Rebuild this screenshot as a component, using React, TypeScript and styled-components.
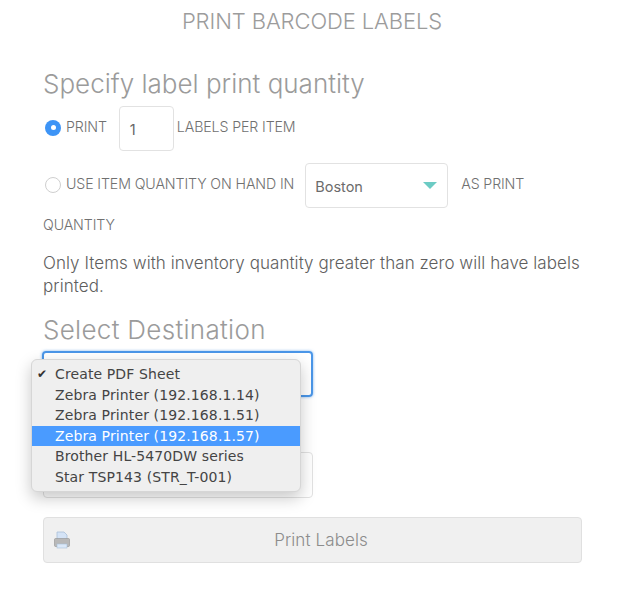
import { createGlobalStyle } from "styled-components"
import styled from "styled-components"

const GlobalStyle = createGlobalStyle`
  html, body {
    margin: 0;
    padding: 0;
    background: #fff;
  }
  body {
    font-family: Inter, "Liberation Sans", sans-serif;
    overflow: hidden;
  }
`

const Page = styled.div`
  width: 622px;
  height: 599px;
  box-sizing: border-box;
  padding: 9px 41px 0 43px;
  display: flex;
  flex-direction: column;
`

const Title = styled.h1`
  margin: 0;
  font-size: 22px;
  line-height: 24px;
  font-weight: 300;
  color: #9c9c9c;
  text-align: center;
  letter-spacing: -0.1px;
`

const Heading = styled.h2<{ $top: number; $spacing: number }>`
  margin: ${(props) => props.$top}px 0 0;
  font-size: 26px;
  line-height: 32px;
  font-weight: 300;
  color: #9b9b9b;
  letter-spacing: ${(props) => props.$spacing}px;
`

const OptionRow = styled.div<{ $top: number }>`
  display: flex;
  align-items: center;
  height: 45px;
  margin-top: ${(props) => props.$top}px;
`

const Radio = styled.span<{ $checked?: boolean }>`
  box-sizing: border-box;
  flex: none;
  width: 16px;
  height: 16px;
  margin: 0 5px 2px 2px;
  border-radius: 50%;
  display: flex;
  align-items: center;
  justify-content: center;
  background: ${(props) => (props.$checked ? "#3d94f6" : "#fff")};
  border: ${(props) => (props.$checked ? "none" : "1px solid #cfcfcf")};
  &::after {
    content: "";
    display: ${(props) => (props.$checked ? "block" : "none")};
    width: 5px;
    height: 5px;
    border-radius: 50%;
    background: #fff;
  }
`

const OptionText = styled.span<{ $left?: number; $up?: number }>`
  font-size: 14.2px;
  line-height: 16px;
  font-weight: 300;
  color: #707070;
  letter-spacing: -0.12px;
  white-space: nowrap;
  margin-left: ${(props) => props.$left ?? 0}px;
  margin-bottom: ${(props) => props.$up ?? 0}px;
`

const QtyInput = styled.div`
  box-sizing: border-box;
  width: 55px;
  height: 45px;
  margin-left: 12px;
  padding: 2px 0 0 10px;
  border: 1px solid #e2e2e2;
  border-radius: 4px;
  display: flex;
  align-items: center;
  font-size: 14.5px;
  color: #666;
`

const LocationSelect = styled.div`
  box-sizing: border-box;
  width: 143px;
  height: 45px;
  margin-left: 11px;
  padding: 1px 10px 0 9px;
  border: 1px solid #e2e2e2;
  border-radius: 4px;
  display: flex;
  align-items: center;
  justify-content: space-between;
  font-size: 14.5px;
  color: #6b6b6b;
`

const Caret = styled.span`
  width: 0;
  height: 0;
  margin-bottom: 1px;
  border-left: 7px solid transparent;
  border-right: 7px solid transparent;
  border-top: 7px solid #6ccbc4;
`

const QuantityLine = styled.div`
  margin-top: 9px;
  font-size: 14.2px;
  line-height: 16px;
  font-weight: 300;
  color: #707070;
  letter-spacing: -0.12px;
`

const Note = styled.p`
  margin: 19px 0 0;
  font-size: 17px;
  line-height: 23px;
  font-weight: 300;
  color: #5e5e5e;
  letter-spacing: 0.06px;
`

const DestinationBlock = styled.div`
  position: relative;
  margin-top: 5px;
  height: 147px;
`

const FocusedSelect = styled.div`
  box-sizing: border-box;
  width: 271px;
  height: 46px;
  margin-left: -1px;
  border: 2px solid #4a96e8;
  border-radius: 4px;
  box-shadow: 0 0 3px rgba(74, 150, 232, 0.7);
`

const SecondField = styled.div`
  box-sizing: border-box;
  width: 270px;
  height: 46px;
  margin-top: 55px;
  border: 1px solid #e2e2e2;
  border-radius: 4px;
`

const Menu = styled.ul`
  position: absolute;
  left: -12px;
  top: 8px;
  box-sizing: border-box;
  width: 270px;
  height: 133px;
  margin: 0;
  padding: 4px 0;
  list-style: none;
  background: #efefef;
  border-radius: 6px;
  border: 1px solid #d6d6d6;
  box-shadow: 0 6px 16px rgba(0, 0, 0, 0.22);
`

const MenuItem = styled.li<{ $active?: boolean }>`
  position: relative;
  height: 20.6px;
  line-height: 20.6px;
  padding-left: 23px;
  font-family: "DejaVu Sans", sans-serif;
  font-size: 14px;
  letter-spacing: 0.12px;
  white-space: nowrap;
  color: ${(props) => (props.$active ? "#fff" : "#444")};
  background: ${(props) => (props.$active ? "#4a9bff" : "transparent")};
`

const Check = styled.span`
  position: absolute;
  left: 5px;
  top: 0;
  font-size: 12px;
  color: #333;
`

const PrintButton = styled.button`
  box-sizing: border-box;
  width: 539px;
  height: 46px;
  margin-top: 19px;
  padding: 0 0 0 17px;
  position: relative;
  border: 1px solid #e0e0e0;
  border-radius: 4px;
  background: #f0f0f0;
  font-family: inherit;
  font-size: 17px;
  font-weight: 300;
  letter-spacing: 0.1px;
  color: #8c8c8c;
`

const ButtonIcon = styled.svg`
  position: absolute;
  left: 8px;
  top: 12px;
`

const destinations = [
  "Create PDF Sheet",
  "Zebra Printer (192.168.1.14)",
  "Zebra Printer (192.168.1.51)",
  "Zebra Printer (192.168.1.57)",
  "Brother HL-5470DW series",
  "Star TSP143 (STR_T-001)"
]

const App = () => {
  return (
    <Page>
      <GlobalStyle />
      <Title>PRINT BARCODE LABELS</Title>

      <Heading $top={35} $spacing={0}>Specify label print quantity</Heading>

      <OptionRow $top={6}>
        <Radio $checked />
        <OptionText $up={3}>PRINT</OptionText>
        <QtyInput>1</QtyInput>
        <OptionText $left={3} $up={3}>LABELS PER ITEM</OptionText>
      </OptionRow>

      <OptionRow $top={12}>
        <Radio />
        <OptionText $up={4}>USE ITEM QUANTITY ON HAND IN</OptionText>
        <LocationSelect>
          Boston
          <Caret />
        </LocationSelect>
        <OptionText $left={13} $up={4}>AS PRINT</OptionText>
      </OptionRow>

      <QuantityLine>QUANTITY</QuantityLine>

      <Note>
        Only Items with inventory quantity greater than zero will have labels printed.
      </Note>

      <Heading $top={16} $spacing={0.3}>Select Destination</Heading>

      <DestinationBlock>
        <FocusedSelect />
        <SecondField />
        <Menu>
          {destinations.map((name, index) => (
            <MenuItem key={name} $active={index === 3}>
              {index === 0 && <Check>✔</Check>}
              {name}
            </MenuItem>
          ))}
        </Menu>
      </DestinationBlock>

      <PrintButton>
        <ButtonIcon width="20" height="20" viewBox="0 0 20 20">
          <path d="M5 2h7l3 3v5H5z" fill="#d4e3f6" stroke="#a9bfd8" strokeWidth="0.8" />
          <path d="M2.5 9.5q0-1 1-1h13q1 0 1 1v6q0 1-1 1h-13q-1 0-1-1z" fill="#b8b8b8" stroke="#909090" strokeWidth="0.6" />
          <rect x="5" y="14" width="10" height="4" fill="#dbe8f8" stroke="#a9bfd8" strokeWidth="0.6" />
        </ButtonIcon>
        Print Labels
      </PrintButton>
    </Page>
  )
}

export default App
